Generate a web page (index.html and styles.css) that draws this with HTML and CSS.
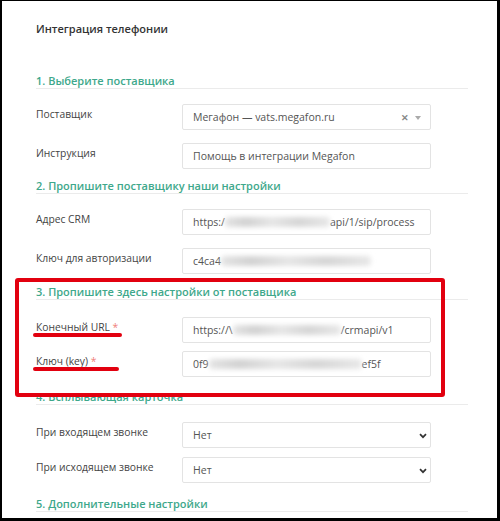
FILE: index.html
```html
<!DOCTYPE html>
<html lang="ru">
<head>
<meta charset="utf-8">
<title>Интеграция телефонии</title>
<link rel="stylesheet" href="styles.css">
</head>
<body>
<div class="frame">
  <div class="panel">
    <div class="title">Интеграция телефонии</div>

    <div class="section s1">
      <div class="sec-head">1. Выберите поставщика</div>
      <div class="rows rows-wide">
        <div class="row">
          <div class="label">Поставщик</div>
          <div class="control select2">
            <span class="val">Мегафон — vats.megafon.ru</span>
            <span class="clear">✕</span>
            <span class="caret"></span>
          </div>
        </div>
        <div class="row">
          <div class="label">Инструкция</div>
          <div class="control"><span class="val">Помощь в интеграции Megafon</span></div>
        </div>
      </div>
    </div>

    <div class="section s2">
      <div class="sec-head">2. Пропишите поставщику наши настройки</div>
      <div class="rows rows-wide">
        <div class="row">
          <div class="label">Адрес CRM</div>
          <div class="control"><span class="val">https:/<span class="blur b1"></span>api/1/sip/process</span></div>
        </div>
        <div class="row">
          <div class="label">Ключ для авторизации</div>
          <div class="control"><span class="val">c4ca4<span class="blur b2"></span></span></div>
        </div>
      </div>
    </div>

    <div class="section s3">
      <div class="sec-head">3. Пропишите здесь настройки от поставщика</div>
      <div class="rows rows-tight">
        <div class="row">
          <div class="label">Конечный URL <span class="req">*</span></div>
          <div class="control"><span class="val">https://\<span class="blur b3"></span>/crmapi/v1</span></div>
        </div>
        <div class="row">
          <div class="label">Ключ (key) <span class="req">*</span></div>
          <div class="control"><span class="val">0f9<span class="blur b4"></span>ef5f</span></div>
        </div>
      </div>
    </div>

    <div class="section s4">
      <div class="sec-head">4. Всплывающая карточка</div>
      <div class="rows rows-tight">
        <div class="row">
          <div class="label">При входящем звонке</div>
          <div class="control native"><span class="val">Нет</span>
            <svg class="chev" width="8" height="6" viewBox="0 0 8 6"><polyline points="1,1.2 4,4.2 7,1.2" fill="none" stroke="#333" stroke-width="1.7"/></svg>
          </div>
        </div>
        <div class="row">
          <div class="label">При исходящем звонке</div>
          <div class="control native"><span class="val">Нет</span>
            <svg class="chev" width="8" height="6" viewBox="0 0 8 6"><polyline points="1,1.2 4,4.2 7,1.2" fill="none" stroke="#333" stroke-width="1.7"/></svg>
          </div>
        </div>
      </div>
    </div>

    <div class="section s5">
      <div class="sec-head">5. Дополнительные настройки</div>
    </div>
  </div>

  <div class="mark-box"></div>
  <div class="mark-line m1"></div>
  <div class="mark-line m2"></div>
</div>
</body>
</html>
```

FILE: styles.css
```css
* { box-sizing: border-box; }
html, body {
  margin: 0;
  padding: 0;
  background: #000;
  width: 500px;
  height: 521px;
  overflow: hidden;
}
.frame {
  position: relative;
  margin: 1px 0 0 2px;
  width: 495px;
  height: 517px;
  background: #fff;
  overflow: hidden;
  font-family: "Open Sans", "Noto Sans", sans-serif;
  color: #444;
}
.panel {
  padding: 20px 29px 0 34px;
}
.title {
  font-size: 11px;
  font-weight: 600;
  line-height: 15px;
  color: #333;
}
.section { margin-top: 9px; }
.s1 { margin-top: 37px; }
.s3 { margin-top: 10px; }
.s4 { margin-top: 12px; }
.s5 { margin-top: 13px; }
.sec-head {
  font-size: 11px;
  font-weight: 600;
  line-height: 15px;
  color: #3ea88b;
  border-bottom: 1px solid #ebebeb;
}
.rows {
  display: flex;
  flex-direction: column;
  margin-top: 15px;
}
.rows-wide { gap: 13px; }
.rows-tight { gap: 8px; margin-top: 17px; }
.s4 .rows-tight { gap: 9px; }
.row {
  display: flex;
  align-items: flex-start;
}
.label {
  width: 146px;
  flex: none;
  font-size: 10.3px;
  line-height: 14px;
  padding-top: 3px;
  color: #444;
}
.req { color: #f0807a; }
.control {
  width: 249px;
  height: 26px;
  border: 1px solid #e3e3e3;
  border-radius: 2px;
  display: flex;
  align-items: center;
  padding: 0 10px;
  font-size: 10.5px;
  color: #555;
  position: relative;
  white-space: nowrap;
}
.val { display: inline-flex; align-items: center; }
.blur {
  display: inline-block;
  height: 10px;
  border-radius: 4px;
  filter: blur(2.5px);
  background: linear-gradient(90deg, #e4e4e4, #d2d2d2 20%, #e6e6e6 45%, #d6d6d6 70%, #e8e8e8);
}
.b1 { width: 105px; }
.b2 { width: 150px; }
.b3 { width: 108px; }
.b4 { width: 153px; }
.select2 .clear {
  position: absolute;
  right: 21px;
  top: 6px;
  font-size: 9px;
  font-weight: 700;
  color: #888;
}
.select2 .caret {
  position: absolute;
  right: 9px;
  top: 11px;
  width: 0;
  height: 0;
  border-left: 3px solid transparent;
  border-right: 3px solid transparent;
  border-top: 4px solid #aaa;
}
.native .chev {
  position: absolute;
  right: 3px;
  top: 10px;
}
.mark-box {
  position: absolute;
  left: 13px;
  top: 277px;
  width: 430px;
  height: 119px;
  border: 4px solid #e2000f;
  border-radius: 3px;
}
.mark-line {
  position: absolute;
  left: 31px;
  height: 4px;
  border-radius: 2px;
  background: #e2000f;
}
.m1 { top: 332px; width: 89px; }
.m2 { top: 366px; width: 86px; }
```
